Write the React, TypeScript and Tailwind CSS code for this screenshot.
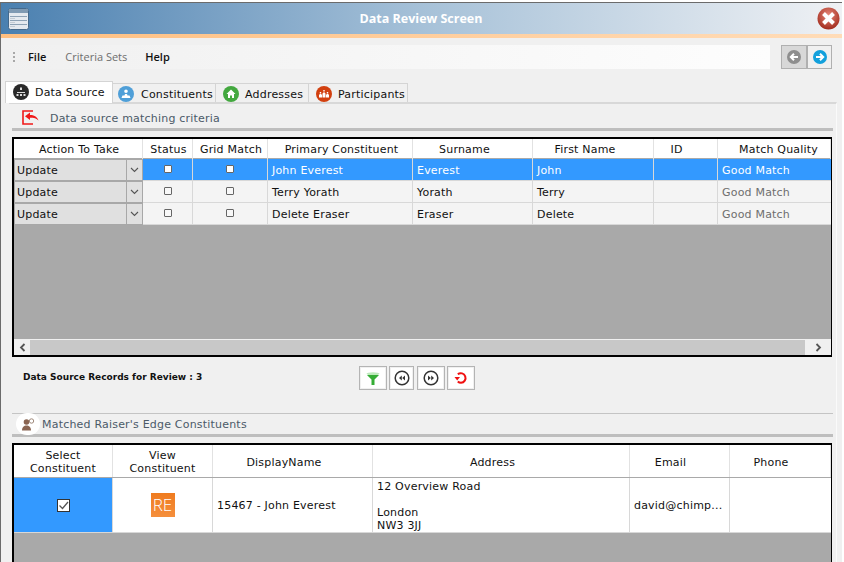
import * as React from 'react';

const sourceCols = 'grid grid-cols-[129px_50px_75px_145px_120px_121px_64px_113px]';
const matchCols = 'grid grid-cols-[99px_100px_160px_257px_100px_101px]';

const sourceHeaders = [
  { label: 'Action To Take', pad: 'pl-[2px]' },
  { label: 'Status', pad: 'pl-[2px]' },
  { label: 'Grid Match', pad: 'pl-[2px]' },
  { label: 'Primary Constituent', pad: 'pl-[3px]' },
  { label: 'Surname', pad: 'pr-[16px]' },
  { label: 'First Name', pad: 'pr-[16px]' },
  { label: 'ID', pad: 'pr-[18px]' },
  { label: 'Match Quality', pad: 'pl-[9px]' },
];

const matchHeaders = [
  { label: 'Select Constituent', pad: 'px-[10px]' },
  { label: 'View Constituent', pad: 'px-[10px]' },
  { label: 'DisplayName', pad: 'pr-[17px]' },
  { label: 'Address', pad: 'pr-[17px]' },
  { label: 'Email', pad: 'pr-[18px]' },
  { label: 'Phone', pad: 'pr-[18px]' },
];

const sourceRows = [
  { name: 'John Everest', surname: 'Everest', first: 'John', selected: true },
  { name: 'Terry Yorath', surname: 'Yorath', first: 'Terry', selected: false },
  { name: 'Delete Eraser', surname: 'Eraser', first: 'Delete', selected: false },
];

function TabBadge({ color, children }: { color: string; children: React.ReactNode }) {
  return (
    <svg width="16" height="16" viewBox="0 0 16 16" className="shrink-0">
      <circle cx="8" cy="8" r="8" fill={color} />
      {children}
    </svg>
  );
}

function Tab({ label, className, icon }: { label: string; className: string; icon: React.ReactNode }) {
  return (
    <div className={`flex h-[19px] items-center border border-l-0 border-b-0 border-[#d4d4d4] bg-[#f0f0f0] pt-[2px] ${className}`}>
      {icon}
      <span className="pt-[3px]">{label}</span>
    </div>
  );
}

function Checkbox({ light }: { light?: boolean }) {
  return <span className={`block h-[8px] w-[8px] rounded-[1px] border border-[#666] ${light ? 'bg-white' : 'bg-[#f8f8f8]'}`} />;
}

function ToolButton({ width, children }: { width: string; children: React.ReactNode }) {
  return (
    <div className={`flex h-[24px] items-center justify-center border border-[#b4b4b4] bg-[#f0f0f0] p-[1px] ${width}`}>
      <div className="flex h-full w-full items-center justify-center bg-white">{children}</div>
    </div>
  );
}

function SeekIcon({ flip }: { flip?: boolean }) {
  return (
    <svg width="16" height="16" viewBox="0 0 16 16" className={flip ? 'rotate-180' : ''}>
      <circle cx="8" cy="8" r="6.800" fill="none" stroke="#333" strokeWidth="1.500" />
      <path d="M7.800 5.500v5L5 8zM11 5.500v5L8.200 8z" fill="#333" />
    </svg>
  );
}

export default function App() {
  return (
    <div className="h-[562px] w-[844px] overflow-hidden bg-white pt-[2px] font-['DejaVu_Sans',sans-serif] text-[11px] tracking-[0.2px] text-[#111]">
      <div className="h-[560px] w-[842px] border-l border-t border-[#6b6b6b] bg-[#f0f0f0]">
        {/* title bar */}
        <div className="flex h-[31px] items-center justify-between bg-gradient-to-r from-[#4a80b0] via-[#a6c1d8] to-[#eff1f4] pl-[7px] pr-[2px]">
          <svg width="21" height="22" viewBox="0 0 21 22">
            <rect x="0.500" y="0.500" width="20" height="21" rx="2" fill="#e4e9ef" stroke="#44698c" />
            <rect x="1" y="1" width="19" height="4" fill="#7f9ab3" />
            <path d="M2 8.500h17M2 12.500h17M2 16.500h17" stroke="#8ea2b5" />
            <path d="M2 10.500h5M2 14.500h5M2 18.500h5" stroke="#c4ccd4" />
          </svg>
          <span className="-ml-[4px] pt-[1px] font-['Open_Sans',sans-serif] text-[12.500px] font-bold tracking-normal text-white">Data Review Screen</span>
          <svg width="23" height="23" viewBox="0 0 23 23">
            <defs>
              <radialGradient id="closeFill" cx="50%" cy="35%" r="70%">
                <stop offset="0%" stopColor="#e8897a" />
                <stop offset="100%" stopColor="#9c2416" />
              </radialGradient>
            </defs>
            <circle cx="11.500" cy="11.500" r="11" fill="url(#closeFill)" />
            <path d="M6.500 6.500l10 10M16.500 6.500l-10 10" stroke="#fff" strokeWidth="4" />
          </svg>
        </div>
        <div className="h-[4px] bg-gradient-to-r from-[#ffbf80] to-[#ffdcb8]" />

        {/* menu */}
        <div className="mt-[7px] flex items-center pr-[10px]">
          <div className="flex h-[24px] w-[769px] items-center bg-gradient-to-r from-[#f0f0f0] to-[#fdfdfd] pl-[12px] font-['Open_Sans',sans-serif] text-[11px] font-semibold tracking-normal">
            <svg width="3" height="12" viewBox="0 0 3 12" className="mr-[12px]">
              <path d="M0 1h2v2H0zM0 5h2v2H0zM0 9h2v2H0z" fill="#a8a8a8" />
            </svg>
            <span className="mr-[19px]">File</span>
            <span className="mr-[18px] font-normal text-[#6e6e6e]">Criteria Sets</span>
            <span>Help</span>
          </div>
          <div className="ml-[11px] flex">
            <div className="flex h-[24px] w-[26px] items-center justify-center border border-[#b0b0b0] bg-[#d8d8d8]">
              <svg width="14" height="14" viewBox="0 0 14 14">
                <circle cx="7" cy="7" r="7" fill="#8e8e8e" />
                <path d="M11 7H4M7 3.800L3.800 7 7 10.200" fill="none" stroke="#fff" strokeWidth="2" />
              </svg>
            </div>
            <div className="flex h-[24px] w-[25px] items-center justify-center border border-[#b0b0b0] bg-[#f0f0f0]">
              <svg width="14" height="14" viewBox="0 0 14 14">
                <circle cx="7" cy="7" r="7" fill="#12a0dc" />
                <path d="M3 7h7M7 3.800L10.200 7 7 10.200" fill="none" stroke="#fff" strokeWidth="2" />
              </svg>
            </div>
          </div>
        </div>

        {/* tabs */}
        <div className="mt-[12px] flex h-[21px] items-end pl-[4px]">
          <div className="z-10 mb-[-1px] flex h-[22px] w-[108px] shrink-0 items-center gap-[6px] self-start border border-b-0 border-[#d4d4d4] bg-white pb-[1px] pl-[7px]">
            <TabBadge color="#2a2a2a">
              <path d="M7 3.500h2v2.500H7zM3.500 10h2v2h-2zM7 10h2v2H7zM10.500 10h2v2h-2zM4 8h8v1H4z" fill="#ddd" />
            </TabBadge>
            <span className="pt-[3px]">Data Source</span>
          </div>
          <Tab
            label="Constituents"
            className="w-[103px] gap-[7px] pl-[5px]"
            icon={
              <TabBadge color="#4f9fd8">
                <path d="M8 3.500a1.800 1.800 0 110 3.600 1.800 1.800 0 010-3.600zM3.500 12l1-2.500h2l.5-1.500h2l.5 1.500h2l1 2.500z" fill="#fff" />
              </TabBadge>
            }
          />
          <Tab
            label="Addresses"
            className="w-[93px] gap-[6px] pl-[7px]"
            icon={
              <TabBadge color="#43a83f">
                <path d="M8 3.500L12.500 8H11v4H9V9.500H7V12H5V8H3.500z" fill="#fff" />
              </TabBadge>
            }
          />
          <Tab
            label="Participants"
            className="w-[99px] gap-[6px] pl-[7px]"
            icon={
              <TabBadge color="#d2400f">
                <path d="M3 11.500V8.800l1.500-1 1.500 1v2.700zM6.500 11.500V7.500L8 6l1.500 1.500v4zM10 11.500V8.800l1.500-1 1.500 1v2.700z" fill="#fff" />
                <path d="M3.800 6h1.400v1.400H3.800zM7.300 4h1.400v1.400H7.300zM10.800 6h1.400v1.400h-1.400z" fill="#fff" />
              </TabBadge>
            }
          />
        </div>

        {/* panel */}
        <div className="ml-[8px] mr-[5px] border-r border-t-2 border-r-[#fafafa] border-t-[#d8d8d8] px-[3px]">
          <div className="flex h-[24px] items-center pl-[10px] pt-[2px] text-[#4b5a68]">
            <svg width="17" height="15" viewBox="0 0 17 15" className="mr-[11px]">
              <path d="M11 1H1v13h10" fill="none" stroke="#f01818" strokeWidth="1.600" />
              <path d="M8 2.500V5c4 0 7 1.500 8.500 5.500-2-2.300-4.500-2.800-8.500-2.800v2.300L3 6.300z" fill="#f01818" />
            </svg>
            <span className="pt-[4px]">Data source matching criteria</span>
          </div>
          <div className="h-[3px] bg-[#bebebe]" />

          {/* source grid */}
          <div className="mt-[6px] flex h-[220px] w-[820px] flex-col border-b-2 border-l-2 border-r border-t-2 border-black bg-[#a9a9a9]">
            <div className={`${sourceCols} h-[20px] border-b border-[#a9a9a9] bg-white`}>
              {sourceHeaders.map((h) => (
                <div key={h.label} className={`flex items-center justify-center whitespace-nowrap border-r border-[#e2e2e2] pt-[3px] text-center ${h.pad}`}>
                  {h.label}
                </div>
              ))}
            </div>
            {sourceRows.map((row) => (
              <div
                key={row.name}
                className={`${sourceCols} h-[22px] border-b border-[#d8d8d8] ${row.selected ? 'bg-[#3399ff] text-white' : 'bg-[#f4f4f4]'}`}
              >
                <div className="flex border border-[#a8a8a8] bg-[#e0e0e0] text-[#111]">
                  <span className="flex flex-1 items-center pl-[2px] pt-[3px]">Update</span>
                  <span className="flex w-[16px] items-center justify-center border-l border-[#a8a8a8]">
                    <svg width="9" height="6" viewBox="0 0 9 6">
                      <path d="M1 1l3.500 3.500L8 1" fill="none" stroke="#555" strokeWidth="1.100" />
                    </svg>
                  </span>
                </div>
                <div className="flex items-center justify-center border-r border-[#d8d8d8] pb-[2px]">
                  <Checkbox light={row.selected} />
                </div>
                <div className="flex items-center justify-center border-r border-[#d8d8d8] pb-[2px]">
                  <Checkbox light={row.selected} />
                </div>
                <div className="flex items-center border-r border-[#d8d8d8] pl-[4px] pt-[3px]">{row.name}</div>
                <div className="flex items-center border-r border-[#d8d8d8] pl-[4px] pt-[3px]">{row.surname}</div>
                <div className="flex items-center border-r border-[#d8d8d8] pl-[4px] pt-[3px]">{row.first}</div>
                <div className="border-r border-[#d8d8d8]" />
                <div className={`flex items-center pl-[4px] pt-[3px] ${row.selected ? '' : 'text-[#6e6e6e]'}`}>Good Match</div>
              </div>
            ))}
            <div className="flex-1" />
            <div className="flex h-[16px] items-center border-t border-[#f0f0f0] bg-[#c8c8c8]">
              <div className="flex h-full w-[16px] items-center justify-center bg-[#f0f0f0]">
                <svg width="7" height="9" viewBox="0 0 7 9">
                  <path d="M5.500 1L2 4.500 5.500 8" fill="none" stroke="#555" strokeWidth="1.800" />
                </svg>
              </div>
              <div className="flex-1" />
              <div className="flex h-full w-[26px] items-center justify-center bg-[#f0f0f0]">
                <svg width="7" height="9" viewBox="0 0 7 9">
                  <path d="M1.500 1L5 4.500 1.500 8" fill="none" stroke="#555" strokeWidth="1.800" />
                </svg>
              </div>
            </div>
          </div>

          {/* records + tools */}
          <div className="mt-[9px] flex h-[24px] w-[820px]">
            <span className="ml-[11px] w-[336px] pt-[5px] text-[9px] font-bold leading-[12px] tracking-normal">Data Source Records for Review : 3</span>
            <div className="flex gap-[2px]">
              <ToolButton width="w-[28px]">
                <svg width="14" height="13" viewBox="0 0 14 13">
                  <ellipse cx="7" cy="1.800" rx="6.500" ry="1.600" fill="#bdeabb" />
                  <path d="M1 3h12L8.500 7.500V13h-3V7.500z" fill="#35ad35" />
                </svg>
              </ToolButton>
              <ToolButton width="w-[25px]"><SeekIcon /></ToolButton>
              <ToolButton width="w-[28px] ml-[1px]"><SeekIcon flip /></ToolButton>
              <ToolButton width="w-[28px]">
                <svg width="14" height="14" viewBox="0 0 14 14">
                  <path d="M3.800 3.200A4.800 4.800 0 117 11.800a4.800 4.800 0 01-3.200-1.300" fill="none" stroke="#f01010" strokeWidth="2" />
                  <path d="M0.500 6h5.500L3.200 9.500z" fill="#f01010" />
                </svg>
              </ToolButton>
            </div>
          </div>

          {/* matched section */}
          <div className="mt-[23px] flex h-[21px] items-center border-t border-[#c4c4c4] pl-[4px] text-[#4b5a68]">
            <span className="mr-[2px] flex h-[22px] w-[24px] items-center justify-center rounded-full bg-white">
              <svg width="13" height="13" viewBox="0 0 13 13">
                <circle cx="4.500" cy="4" r="2.800" fill="#8a6552" />
                <path d="M0 12.500c0-3.500 2-5 4.500-5s4.500 1.500 4.500 5z" fill="#8a6552" />
                <circle cx="9.500" cy="3" r="2.200" fill="none" stroke="#a08a7c" />
              </svg>
            </span>
            <span className="pt-[3px]">Matched Raiser's Edge Constituents</span>
          </div>
          <div className="h-[3px] bg-[#bebebe]" />

          {/* match grid */}
          <div className="mt-[6px] h-[130px] w-[820px] border-l-2 border-r border-t-2 border-black bg-[#a9a9a9]">
            <div className={`${matchCols} h-[33px] border-b border-[#a9a9a9] bg-white`}>
              {matchHeaders.map((h) => (
                <div key={h.label} className={`flex items-center justify-center border-r border-[#e2e2e2] pt-[2px] text-center leading-[13px] ${h.pad}`}>
                  {h.label}
                </div>
              ))}
            </div>
            <div className={`${matchCols} h-[55px] border-b border-[#d8d8d8] bg-white`}>
              <div className="flex items-center justify-center border-r border-[#d8d8d8] bg-[#3399ff]">
                <span className="flex h-[13px] w-[13px] items-center justify-center border border-[#333] bg-white">
                  <svg width="11" height="11" viewBox="0 0 11 11">
                    <path d="M1.500 5.500l3 3L10 2" fill="none" stroke="#555" strokeWidth="1.300" />
                  </svg>
                </span>
              </div>
              <div className="flex items-center justify-center border-r border-[#d8d8d8]">
                <span className="flex h-[24px] w-[24px] items-center justify-center bg-gradient-to-b from-[#ef7b1e] to-[#f58f3c] font-['Open_Sans',sans-serif] text-[17px] font-light tracking-normal text-white">RE</span>
              </div>
              <div className="flex items-center border-r border-[#d8d8d8] pl-[4px] pt-[3px]">15467 - John Everest</div>
              <div className="border-r border-[#d8d8d8] pl-[4px] pt-[2px] leading-[13px]">
                12 Overview Road
                <br />
                <br />
                London
                <br />
                NW3 3JJ
              </div>
              <div className="flex items-center whitespace-nowrap border-r border-[#d8d8d8] pl-[4px] pt-[3px]">david@chimp...</div>
              <div />
            </div>
          </div>
        </div>
      </div>
    </div>
  );
}
